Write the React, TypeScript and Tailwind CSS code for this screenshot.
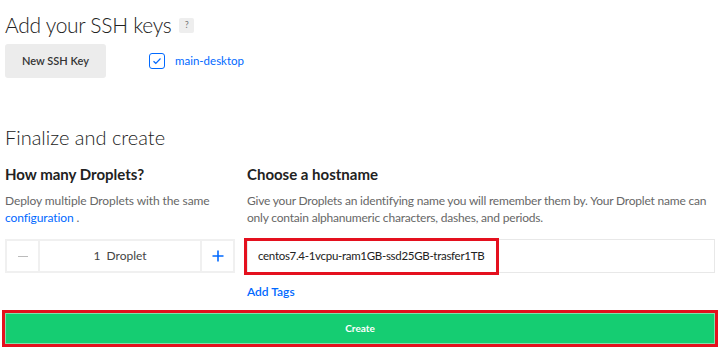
import React from "react";

export default function App() {
  return (
    <div
      className="w-[720px] h-[364px] bg-white text-[#222] overflow-hidden"
      style={{ fontFamily: "Lato, 'Open Sans', sans-serif" }}
    >
      <div className="px-[5px] pt-[8px]">
        <div className="flex items-center gap-[8px] h-[32px]">
          <h1 className="text-[21px] font-light leading-none tracking-[-0.3px]">Add your SSH keys</h1>
          <span className="w-[15px] h-[15px] bg-[#eeeeee] rounded-[2px] text-[9px] text-[#777] flex items-center justify-center mt-[2px]">?</span>
        </div>
        <div className="flex items-center mt-[4px] h-[34px]">
          <button className="w-[101px] h-[34px] bg-[#ececec] rounded-[3px] text-[11px] font-semibold text-[#333]">
            New SSH Key
          </button>
          <div className="flex items-center ml-[43px] gap-[10px]">
            <span className="w-[16px] h-[16px] border border-[#0069ff] rounded-[3px] flex items-center justify-center">
              <svg width="10" height="8" viewBox="0 0 10 8" fill="none">
                <path d="M1.5 4.2 L3.8 6.3 L8.5 1.5" stroke="#0069ff" strokeWidth="1.2" />
              </svg>
            </span>
            <span className="text-[11.5px] text-[#0069ff]">main-desktop</span>
          </div>
        </div>

        <h2 className="text-[20px] font-light leading-none mt-[49px] h-[20px]">Finalize and create</h2>

        <div className="flex gap-[12px] mt-[18px]">
          <div className="w-[230px]">
            <h3 className="text-[15px] font-bold leading-[18px]">How many Droplets?</h3>
            <p className="text-[12px] text-[#676767] leading-[17px] mt-[9px] tracking-[-0.1px]">
              Deploy multiple Droplets with the same <span className="text-[#0069ff]">configuration</span> .
            </p>
            <div className="flex h-[34px] mt-[13px] border-2 border-[#f0f0f0]">
              <div className="w-[33px] flex items-center justify-center border-r-2 border-[#f0f0f0]">
                <span className="w-[10px] h-[1px] bg-[#bbb]" />
              </div>
              <div className="flex-1 flex items-center justify-center text-[12px] text-[#444]">1&nbsp; Droplet</div>
              <div className="w-[33px] flex items-center justify-center border-l-2 border-[#f0f0f0] text-[#0069ff]">
                <svg width="12" height="12" viewBox="0 0 12 12">
                  <path d="M6 0.5 V11.5 M0.5 6 H11.5" stroke="#0069ff" strokeWidth="1.6" />
                </svg>
              </div>
            </div>
          </div>
          <div className="flex-1">
            <h3 className="text-[15px] font-bold leading-[18px]">Choose a hostname</h3>
            <p className="text-[12px] text-[#676767] leading-[17px] mt-[9px] tracking-[-0.2px]">
              Give your Droplets an identifying name you will remember them by. Your Droplet name can only contain alphanumeric characters, dashes, and periods.
            </p>
            <div className="relative h-[34px] mt-[13px] border border-[#e8e8e8] flex items-center">
              <span className="text-[11.5px] text-[#222] pl-[10px] tracking-[-0.3px]">centos7.4-1vcpu-ram1GB-ssd25GB-trasfer1TB</span>
              <div className="absolute left-[-4px] top-[-2px] w-[255px] h-[37px] border-[3px] border-[#e4101e]" />
            </div>
            <div className="text-[12px] text-[#0069ff] font-semibold mt-[10px]">Add Tags</div>
          </div>
        </div>
      </div>
      <div className="mx-[2px] mt-[9px] h-[37px] border-[3px] border-[#e4101e]">
        <div className="h-full bg-[#15cd72] border border-[#7fe0ad] flex items-center justify-center text-white text-[10px] font-bold">
          Create
        </div>
      </div>
    </div>
  );
}
